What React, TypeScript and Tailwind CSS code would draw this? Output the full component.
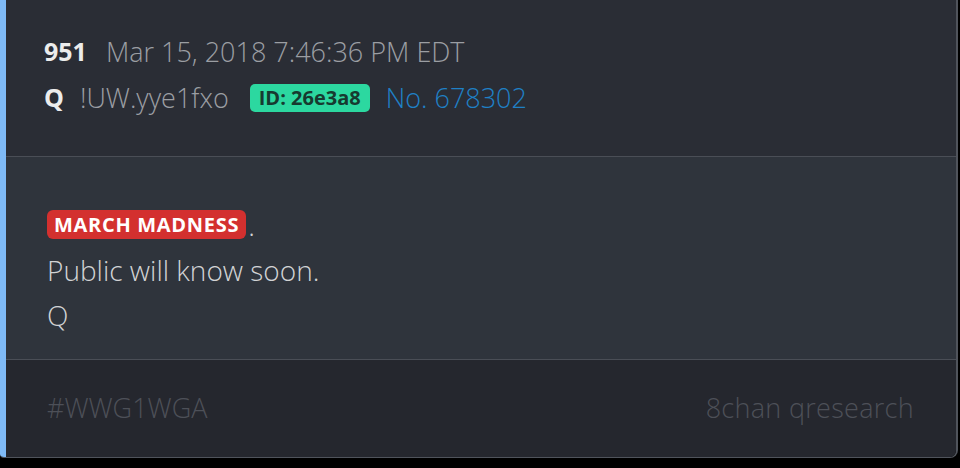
import React from "react";

export default function App() {
  return (
    <div className="w-[960px] h-[468px] bg-black overflow-hidden" style={{ fontFamily: '"Open Sans", "Noto Sans", sans-serif' }}>
      <div className="w-[958px] h-[458px] flex rounded-br-lg rounded-bl-sm overflow-hidden border-r-2 border-b border-[#50545c]">
        <div className="w-[6px] bg-[#7fbaf6] shrink-0" />
        <div className="flex-1 flex flex-col">
          <div className="h-[157px] bg-[#2a2d35] pl-[38px] pt-[29px] border-b border-[#4a4e56]">
            <div className="h-[46px] flex items-center text-[27px] font-light">
              <span className="font-bold text-[#ececec] text-[25px] mr-[19px]">951</span>
              <span className="text-[#9b9ea3]">Mar 15, 2018 7:46:36 PM EDT</span>
            </div>
            <div className="h-[46px] flex items-center text-[27px] font-light">
              <span className="font-bold text-[#ececec] text-[25px] mr-[16px]">Q</span>
              <span className="text-[#9b9ea3] mr-[21px]">!UW.yye1fxo</span>
              <span className="bg-[#2cd8a0] text-[#173a30] font-bold text-[20px] leading-[28px] h-[28px] px-[9px] rounded-[5px] mr-[16px]">ID: 26e3a8</span>
              <span className="text-[#1f80c6]">No. 678302</span>
            </div>
          </div>
          <div className="h-[203px] bg-[#2f343c] pl-[41px] pt-[45px] border-b border-[#4a4e56] text-[28px] font-light text-[#d2d3d5]">
            <div className="h-[45px] flex items-center">
              <span className="bg-[#d3302f] text-white font-bold text-[20px] leading-[29px] h-[29px] px-[7px] rounded-[6px] tracking-[0.7px]">MARCH MADNESS</span>
              <span className="ml-[2px]">.</span>
            </div>
            <div className="h-[45px] flex items-center">Public will know soon.</div>
            <div className="h-[45px] flex items-center">Q</div>
          </div>
          <div className="flex-1 bg-[#25272e] flex items-center justify-between pl-[41px] pr-[42px] text-[27px] font-light text-[#4d5058]">
            <span>#WWG1WGA</span>
            <span className="tracking-[0.3px]">8chan qresearch</span>
          </div>
        </div>
      </div>
    </div>
  );
}
